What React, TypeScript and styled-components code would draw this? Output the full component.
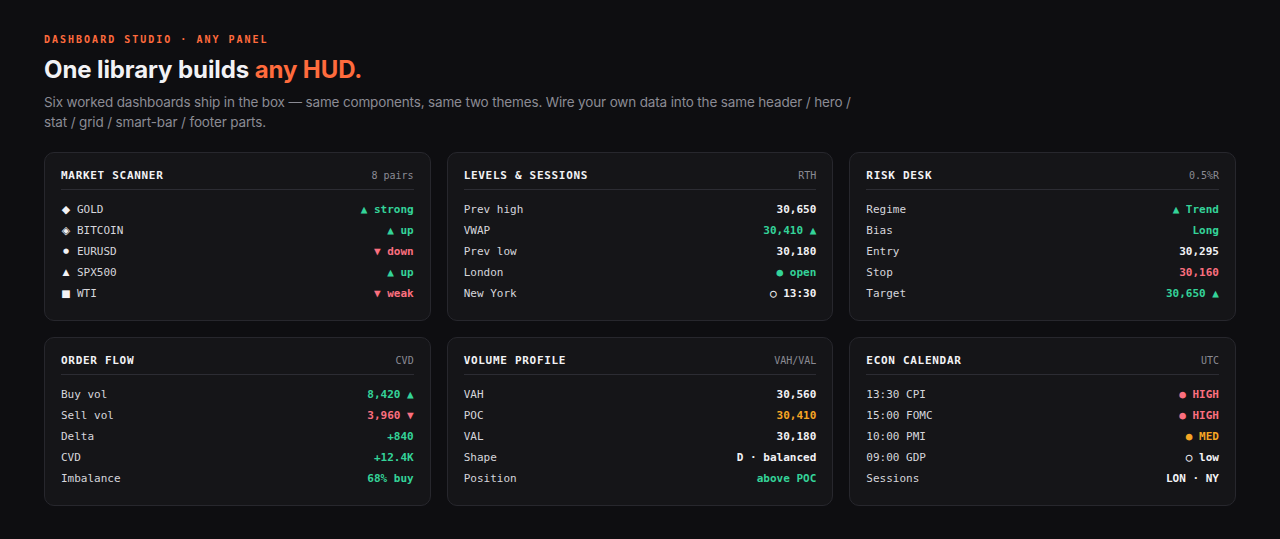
import React from "react";
import styled, { createGlobalStyle } from "styled-components";

const mono = `"DejaVu Sans Mono", "Liberation Mono", monospace`;
const sans = `Inter, "Noto Sans", "Liberation Sans", sans-serif`;

const c = {
  bg: "#0e0e11",
  card: "#151518",
  border: "#27272d",
  rule: "#2c2c33",
  text: "#f2f2f5",
  label: "#d6d6dc",
  muted: "#8b8b94",
  orange: "#ff6b3d",
  green: "#34d399",
  red: "#fb6f7f",
  amber: "#f5a524",
};

type Tone = "plain" | "green" | "red" | "amber";
const toneColor: Record<Tone, string> = {
  plain: c.text,
  green: c.green,
  red: c.red,
  amber: c.amber,
};

const Global = createGlobalStyle`
  html, body { margin: 0; background: ${c.bg}; }
  * { box-sizing: border-box; }
`;

const Page = styled.main`
  min-height: 539px;
  padding: 33px 44px 32px;
  background: ${c.bg};
  font-family: ${sans};
`;

const Eyebrow = styled.div`
  font-family: ${mono};
  font-size: 10px;
  font-weight: 700;
  line-height: 14px;
  letter-spacing: 2px;
  color: ${c.orange};
`;

const Heading = styled.h1`
  margin: 8px 0 0;
  font-size: 24px;
  line-height: 30px;
  font-weight: 700;
  letter-spacing: -0.1px;
  color: ${c.text};

  span {
    color: ${c.orange};
  }
`;

const Lede = styled.p`
  margin: 7px 0 0;
  max-width: 815px;
  font-size: 13.5px;
  line-height: 20px;
  letter-spacing: -0.15px;
  color: ${c.muted};
`;

const Grid = styled.section`
  margin-top: 20px;
  display: grid;
  grid-template-columns: repeat(3, 1fr);
  gap: 16px;
`;

const Card = styled.div`
  background: ${c.card};
  border: 1px solid ${c.border};
  border-radius: 10px;
  padding: 15px 16px 16px;
  font-family: ${mono};
`;

const CardHead = styled.div`
  display: flex;
  justify-content: space-between;
  align-items: center;
  height: 14px;
  margin-bottom: 7px;
`;

const Rule = styled.div`
  height: 1px;
  background: ${c.rule};
  margin-bottom: 9px;
`;

const CardTitle = styled.div`
  font-size: 11px;
  font-weight: 700;
  letter-spacing: 0.7px;
  color: ${c.text};
`;

const CardMeta = styled.div`
  font-size: 10px;
  color: ${c.muted};
`;

const Row = styled.div`
  display: flex;
  justify-content: space-between;
  align-items: center;
  height: 21px;
  font-size: 11px;
`;

const Label = styled.span`
  color: ${c.label};
  display: flex;
  align-items: center;
  gap: 6px;
`;

const Glyph = styled.span<{ $size?: number }>`
  display: inline-block;
  width: 10px;
  text-align: center;
  font-family: "DejaVu Sans", sans-serif;
  font-size: ${({ $size }) => $size ?? 10}px;
  line-height: 1;
  color: ${c.text};
`;

const Value = styled.span<{ $tone: Tone }>`
  font-weight: 700;
  color: ${({ $tone }) => toneColor[$tone]};
  white-space: pre;
`;

type RowData = { label: string; glyph?: string; glyphSize?: number; value: string; tone?: Tone };
type CardData = { title: string; meta: string; rows: RowData[] };

const cards: CardData[] = [
  {
    title: "MARKET SCANNER",
    meta: "8 pairs",
    rows: [
      { glyph: "◆", glyphSize: 11, label: "GOLD", value: "▲ strong", tone: "green" },
      { glyph: "◈", glyphSize: 11, label: "BITCOIN", value: "▲ up", tone: "green" },
      { glyph: "●", glyphSize: 7, label: "EURUSD", value: "▼ down", tone: "red" },
      { glyph: "▲", glyphSize: 9, label: "SPX500", value: "▲ up", tone: "green" },
      { glyph: "■", glyphSize: 10, label: "WTI", value: "▼ weak", tone: "red" },
    ],
  },
  {
    title: "LEVELS & SESSIONS",
    meta: "RTH",
    rows: [
      { label: "Prev high", value: "30,650" },
      { label: "VWAP", value: "30,410 ▲", tone: "green" },
      { label: "Prev low", value: "30,180" },
      { label: "London", value: "● open", tone: "green" },
      { label: "New York", value: "○ 13:30" },
    ],
  },
  {
    title: "RISK DESK",
    meta: "0.5%R",
    rows: [
      { label: "Regime", value: "▲ Trend", tone: "green" },
      { label: "Bias", value: "Long", tone: "green" },
      { label: "Entry", value: "30,295" },
      { label: "Stop", value: "30,160", tone: "red" },
      { label: "Target", value: "30,650 ▲", tone: "green" },
    ],
  },
  {
    title: "ORDER FLOW",
    meta: "CVD",
    rows: [
      { label: "Buy vol", value: "8,420 ▲", tone: "green" },
      { label: "Sell vol", value: "3,960 ▼", tone: "red" },
      { label: "Delta", value: "+840", tone: "green" },
      { label: "CVD", value: "+12.4K", tone: "green" },
      { label: "Imbalance", value: "68% buy", tone: "green" },
    ],
  },
  {
    title: "VOLUME PROFILE",
    meta: "VAH/VAL",
    rows: [
      { label: "VAH", value: "30,560" },
      { label: "POC", value: "30,410", tone: "amber" },
      { label: "VAL", value: "30,180" },
      { label: "Shape", value: "D · balanced" },
      { label: "Position", value: "above POC", tone: "green" },
    ],
  },
  {
    title: "ECON CALENDAR",
    meta: "UTC",
    rows: [
      { label: "13:30 CPI", value: "● HIGH", tone: "red" },
      { label: "15:00 FOMC", value: "● HIGH", tone: "red" },
      { label: "10:00 PMI", value: "● MED", tone: "amber" },
      { label: "09:00 GDP", value: "○ low" },
      { label: "Sessions", value: "LON · NY" },
    ],
  },
];

function Panel({ data }: { data: CardData }) {
  return (
    <Card>
      <CardHead>
        <CardTitle>{data.title}</CardTitle>
        <CardMeta>{data.meta}</CardMeta>
      </CardHead>
      <Rule />
      {data.rows.map((r) => (
        <Row key={r.label}>
          <Label>
            {r.glyph && <Glyph $size={r.glyphSize}>{r.glyph}</Glyph>}
            {r.label}
          </Label>
          <Value $tone={r.tone ?? "plain"}>{r.value}</Value>
        </Row>
      ))}
    </Card>
  );
}

export default function App() {
  return (
    <>
      <Global />
      <Page>
        <Eyebrow>DASHBOARD STUDIO · ANY PANEL</Eyebrow>
        <Heading>
          One library builds <span>any HUD.</span>
        </Heading>
        <Lede>
          Six worked dashboards ship in the box — same components, same two themes. Wire your own data
          into the same header / hero / stat / grid / smart-bar / footer parts.
        </Lede>
        <Grid>
          {cards.map((d) => (
            <Panel key={d.title} data={d} />
          ))}
        </Grid>
      </Page>
    </>
  );
}
